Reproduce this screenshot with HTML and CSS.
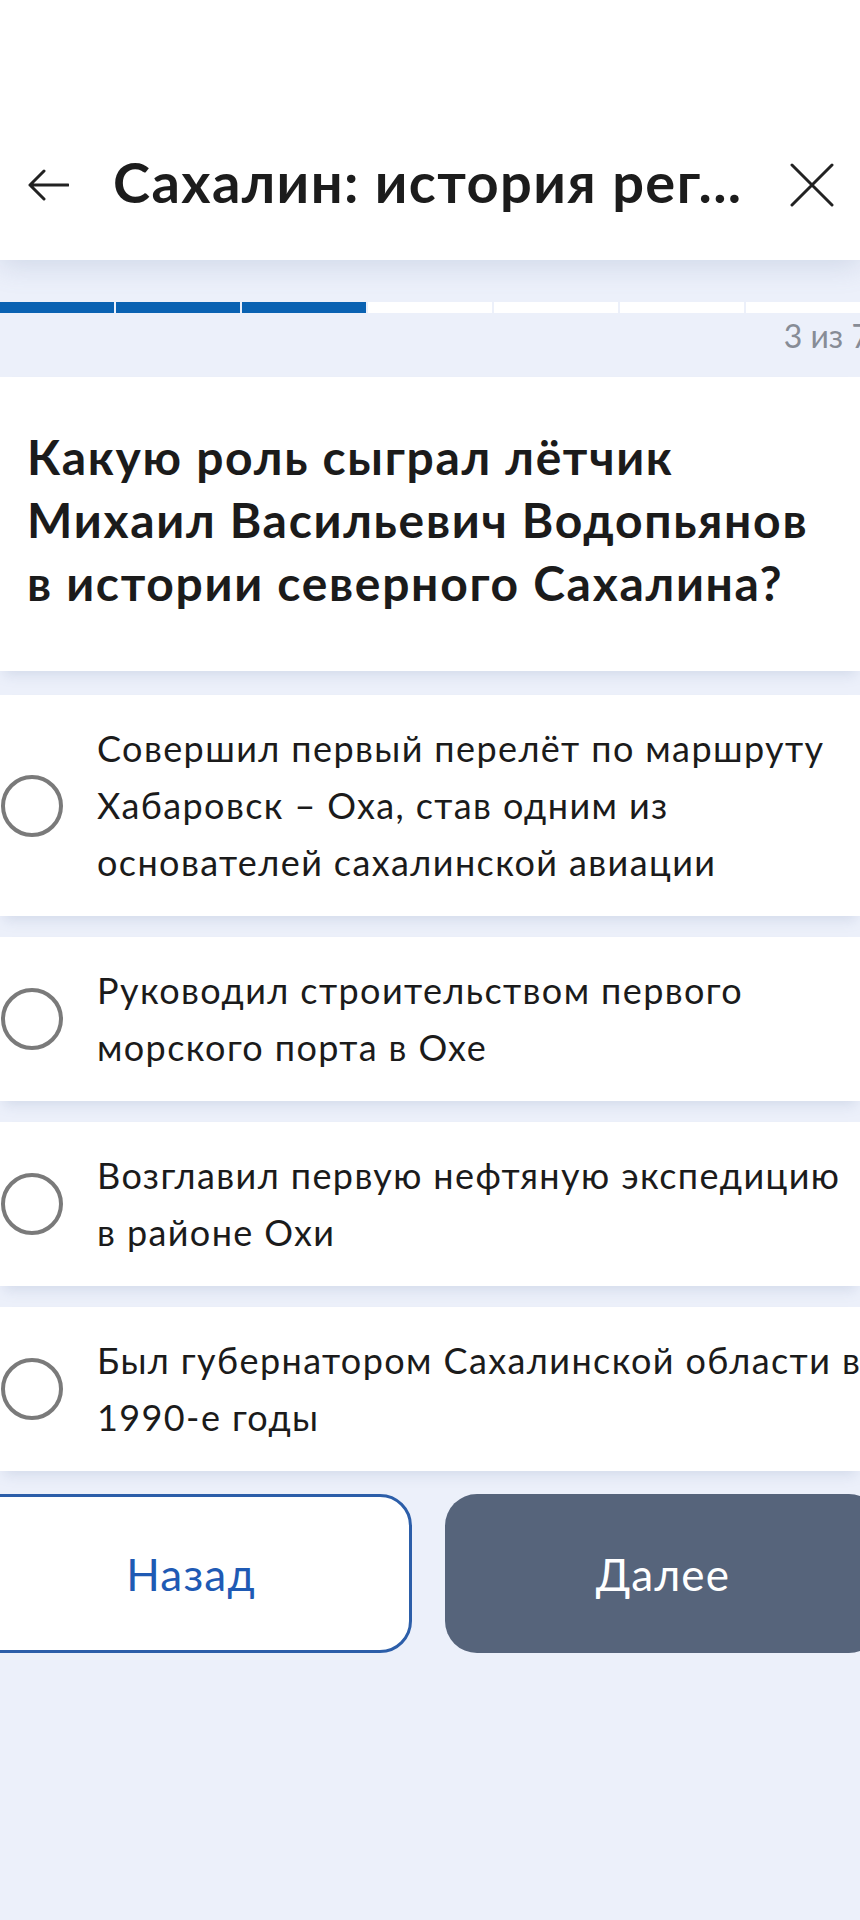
FILE: index.html
```html
<!DOCTYPE html>
<html lang="ru">
<head>
<meta charset="utf-8">
<title>Сахалин: история региона</title>
<link rel="stylesheet" href="styles.css">
</head>
<body>
<div class="page">
  <header class="topbar">
    <svg class="icon-back" viewBox="0 0 42 32" width="42" height="32" aria-hidden="true">
      <path d="M41 16H3M17 2L3 16l14 14" fill="none" stroke="#222" stroke-width="3" stroke-linecap="round" stroke-linejoin="round"/>
    </svg>
    <h1 class="title">Сахалин: история рег...</h1>
    <svg class="icon-close" viewBox="0 0 44 44" width="44" height="44" aria-hidden="true">
      <path d="M2 2L42 42M42 2L2 42" fill="none" stroke="#222" stroke-width="3" stroke-linecap="round"/>
    </svg>
  </header>

  <section class="progress">
    <div class="bar">
      <span class="seg done"></span>
      <span class="seg done"></span>
      <span class="seg done"></span>
      <span class="seg"></span>
      <span class="seg"></span>
      <span class="seg"></span>
      <span class="seg"></span>
    </div>
    <div class="counter">3 из 7</div>
  </section>

  <section class="question card">
    <p>Какую роль сыграл лётчик<br>Михаил Васильевич Водопьянов<br>в истории северного Сахалина?</p>
  </section>

  <ul class="answers">
    <li class="answer card"><span class="radio"></span><span class="answer-text">Совершил первый перелёт по маршруту<br>Хабаровск – Оха, став одним из<br>основателей сахалинской авиации</span></li>
    <li class="answer card"><span class="radio"></span><span class="answer-text">Руководил строительством первого<br>морского порта в Охе</span></li>
    <li class="answer card"><span class="radio"></span><span class="answer-text">Возглавил первую нефтяную экспедицию<br>в районе Охи</span></li>
    <li class="answer card"><span class="radio"></span><span class="answer-text">Был губернатором Сахалинской области в<br>1990-е годы</span></li>
  </ul>

  <div class="actions">
    <button class="btn btn-back">Назад</button>
    <button class="btn btn-next">Далее</button>
  </div>
</div>
</body>
</html>
```

FILE: styles.css
```css
* {
  box-sizing: border-box;
}

html, body {
  margin: 0;
  padding: 0;
}

body {
  background: #ecf0fa;
  font-family: "Lato", "Noto Sans", sans-serif;
  color: #1b1b1b;
  overflow-x: hidden;
  width: 860px;
  min-height: 1920px;
}

.page {
  display: flex;
  flex-direction: column;
}

.topbar {
  position: relative;
  z-index: 2;
  height: 260px;
  background: #ffffff;
  display: flex;
  align-items: center;
  padding: 140px 26px 30px 27px;
  box-shadow: 0 6px 26px rgba(110, 130, 175, 0.22);
}

.icon-back {
  flex: none;
  display: block;
}

.title {
  flex: 1;
  margin: -6px 0 0 44px;
  font-size: 56px;
  line-height: 64px;
  font-weight: 700;
  letter-spacing: 1.4px;
  color: #1c1c1c;
  white-space: nowrap;
}

.icon-close {
  flex: none;
  display: block;
}

.progress {
  padding: 42px 0 21px;
}

.bar {
  display: grid;
  grid-template-columns: repeat(7, 1fr);
  gap: 2.5px;
  height: 11px;
  margin: 0 -10px;
}

.seg {
  background: #ffffff;
}

.seg.done {
  background: #0a62b2;
}

.counter {
  margin: 3px -10px 0 0;
  text-align: right;
  font-size: 32px;
  line-height: 40px;
  color: #878c96;
}

.card {
  background: #ffffff;
  position: relative;
  box-shadow: 0 8px 12px -4px rgba(100, 120, 165, 0.18);
}

.question {
  padding: 48px 27px 57px;
}

.question p {
  margin: 0;
  font-size: 48px;
  line-height: 63px;
  font-weight: 700;
  letter-spacing: 1.7px;
  white-space: nowrap;
}

.answers {
  list-style: none;
  margin: 24px 0 0;
  padding: 0;
  display: flex;
  flex-direction: column;
  gap: 21px;
}

.answer {
  display: flex;
  align-items: center;
  padding: 25px 0 25px 1px;
}

.radio {
  flex: none;
  width: 62px;
  height: 62px;
  border: 4.5px solid #7a7a7a;
  border-radius: 50%;
  margin-right: 34px;
}

.answer-text {
  font-size: 36px;
  line-height: 57px;
  letter-spacing: 1.4px;
  white-space: nowrap;
}

.actions {
  display: flex;
  gap: 33px;
  margin: 23px -21px 0 -30px;
}

.btn {
  flex: 1;
  height: 159px;
  border-radius: 32px;
  font-family: "Lato", "Noto Sans", sans-serif;
  font-size: 44px;
  letter-spacing: 1.2px;
  cursor: pointer;
}

.btn-back {
  background: #ffffff;
  border: 3px solid #2c5ea9;
  color: #1f5ab4;
}

.btn-next {
  background: #56647b;
  border: none;
  color: #ffffff;
}
```
